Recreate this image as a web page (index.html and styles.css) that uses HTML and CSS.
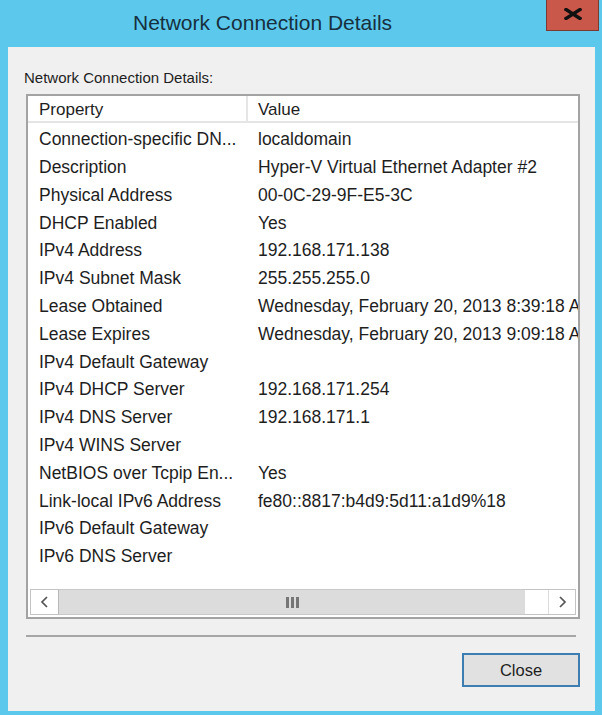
FILE: index.html
```html
<!DOCTYPE html>
<html>
<head>
<meta charset="utf-8">
<link rel="stylesheet" href="styles.css">
</head>
<body>
<div class="window">
  <div class="titlebar">
    <div class="title">Network Connection Details</div>
    <div class="close-x">
      <svg width="18" height="12" viewBox="0 0 18 12"><path d="M2 1.5 L16 10.5 M16 1.5 L2 10.5" stroke="#111" stroke-width="3.4" stroke-linecap="square"/></svg>
    </div>
  </div>
  <div class="panel">
    <div class="label">Network Connection Details:</div>
    <div class="listbox">
      <div class="header">
        <div class="hcell hcell-prop">Property</div>
        <div class="hcell">Value</div>
      </div>
      <div class="rows">
        <div class="cell">Connection-specific DN...</div><div class="cell val">localdomain</div>
        <div class="cell">Description</div><div class="cell val">Hyper-V Virtual Ethernet Adapter #2</div>
        <div class="cell">Physical Address</div><div class="cell val">00-0C-29-9F-E5-3C</div>
        <div class="cell">DHCP Enabled</div><div class="cell val">Yes</div>
        <div class="cell">IPv4 Address</div><div class="cell val">192.168.171.138</div>
        <div class="cell">IPv4 Subnet Mask</div><div class="cell val">255.255.255.0</div>
        <div class="cell">Lease Obtained</div><div class="cell val">Wednesday, February 20, 2013 8:39:18 AM</div>
        <div class="cell">Lease Expires</div><div class="cell val">Wednesday, February 20, 2013 9:09:18 AM</div>
        <div class="cell">IPv4 Default Gateway</div><div class="cell val"></div>
        <div class="cell">IPv4 DHCP Server</div><div class="cell val">192.168.171.254</div>
        <div class="cell">IPv4 DNS Server</div><div class="cell val">192.168.171.1</div>
        <div class="cell">IPv4 WINS Server</div><div class="cell val"></div>
        <div class="cell">NetBIOS over Tcpip En...</div><div class="cell val">Yes</div>
        <div class="cell">Link-local IPv6 Address</div><div class="cell val">fe80::8817:b4d9:5d11:a1d9%18</div>
        <div class="cell">IPv6 Default Gateway</div><div class="cell val"></div>
        <div class="cell">IPv6 DNS Server</div><div class="cell val"></div>
      </div>
      <div class="hscroll">
        <div class="sbtn sbtn-left">
          <svg width="9" height="12" viewBox="0 0 9 12"><polyline points="7,1 2,6 7,11" fill="none" stroke="#555" stroke-width="1.7"/></svg>
        </div>
        <div class="thumb">
          <div class="grip"><span></span><span></span><span></span></div>
        </div>
        <div class="track"></div>
        <div class="sbtn sbtn-right">
          <svg width="9" height="12" viewBox="0 0 9 12"><polyline points="2,1 7,6 2,11" fill="none" stroke="#555" stroke-width="1.7"/></svg>
        </div>
      </div>
    </div>
    <div class="separator"></div>
    <div class="footer">
      <button class="btn-close">Close</button>
    </div>
  </div>
</div>
</body>
</html>
```
FILE: styles.css
```css
html, body {
  margin: 0;
  padding: 0;
}
body {
  background: #5cc9ec;
  width: 602px;
  height: 715px;
  overflow: hidden;
  font-family: "Liberation Sans", Arial, sans-serif;
  color: #1e1e1e;
}
.window {
  display: flex;
  flex-direction: column;
  height: 715px;
}
.titlebar {
  height: 47px;
  display: flex;
  align-items: flex-start;
}
.title {
  margin-left: 133px;
  font-size: 21px;
  line-height: 45px;
  color: #17303f;
  white-space: nowrap;
}
.close-x {
  margin-left: auto;
  margin-right: 3px;
  width: 53px;
  height: 31px;
  background: #c9584b;
  border: 1px solid #7a3a33;
  border-top: none;
  display: flex;
  align-items: flex-start;
  justify-content: center;
  padding-top: 8px;
  box-sizing: border-box;
}
.panel {
  margin: 0 7px 0 8px;
  height: 664px;
  background: #f0f0f0;
  display: flex;
  flex-direction: column;
  padding-top: 21px;
  box-sizing: border-box;
}
.label {
  margin-left: 16px;
  font-size: 15px;
  line-height: 20px;
  white-space: nowrap;
}
.listbox {
  margin: 6px 0 0 18px;
  width: 554px;
  height: 525px;
  box-sizing: border-box;
  border: 2px solid #a3a3a3;
  background: #fff;
  display: flex;
  flex-direction: column;
  overflow: hidden;
}
.header {
  display: grid;
  grid-template-columns: 220px 1fr;
  height: 27px;
  box-sizing: border-box;
  border-bottom: 2px solid #e5e5e5;
  flex: none;
}
.hcell {
  font-size: 17px;
  line-height: 23px;
  padding: 2px 0 0 10px;
  white-space: nowrap;
}
.hcell-prop {
  padding-left: 11px;
  border-right: 2px solid #e5e5e5;
}
.rows {
  flex: 1;
  display: grid;
  grid-template-columns: 220px 1fr;
  grid-auto-rows: 27.8px;
  align-content: start;
  padding-top: 3.3px;
  overflow: hidden;
}
.cell {
  font-size: 17.5px;
  line-height: 27.8px;
  padding-left: 11px;
  white-space: nowrap;
  overflow: hidden;
}
.cell.val {
  padding-left: 10px;
  overflow: hidden;
}
.hscroll {
  flex: none;
  height: 26px;
  margin: 0 2px 2px 2px;
  box-sizing: border-box;
  border: 1px solid #c4c4c4;
  display: flex;
  background: #fff;
}
.sbtn {
  width: 27px;
  display: flex;
  align-items: center;
  justify-content: center;
  background: #fff;
}
.sbtn-right {
  width: 26px;
  border-left: 1px solid #dcdcdc;
}
.thumb {
  width: 466px;
  background: #dcdcdc;
  border-left: 1px solid #b8b8b8;
  border-top: 1px solid #c8c8c8;
  border-bottom: 1px solid #c8c8c8;
  margin: -1px 0;
  display: flex;
  align-items: center;
  justify-content: flex-end;
  padding-right: 0;
}
.grip {
  display: flex;
  gap: 2px;
  margin-right: 226px;
}
.grip span {
  display: block;
  width: 3px;
  height: 11px;
  background: #767676;
}
.track {
  flex: 1;
  background: #fff;
}
.separator {
  margin: 16px 0 0 18px;
  width: 550px;
  height: 2px;
  background: #a6a6a6;
}
.footer {
  display: flex;
  justify-content: flex-end;
  padding-right: 15px;
  margin-top: 16px;
}
.btn-close {
  width: 118px;
  height: 34px;
  box-sizing: border-box;
  border: 2px solid #3d7db0;
  background: #e1e1e1;
  font-family: "Liberation Sans", Arial, sans-serif;
  font-size: 16.5px;
  color: #1e1e1e;
  padding: 0;
}
```
